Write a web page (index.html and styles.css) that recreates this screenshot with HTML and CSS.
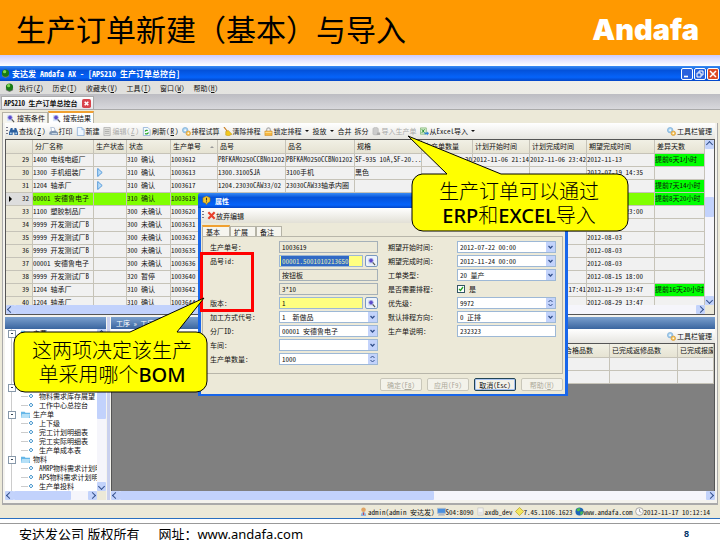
FILE: index.html
```html
<!DOCTYPE html>
<html lang="zh-CN">
<head>
<meta charset="utf-8">
<title>生产订单新建（基本）与导入</title>
<link rel="stylesheet" href="styles.css">
</head>
<body>
<svg class="defs" aria-hidden="true">
  <symbol id="orb" viewBox="0 0 10 10"><path d="M1 6h8v2L5 10 1 8z" fill="#777"/><circle cx="5" cy="4.5" r="4" fill="#187a12"/><circle cx="4" cy="3" r="1.8" fill="#7ed957"/></symbol>
  <symbol id="find" viewBox="0 0 10 10"><path d="M2 1h2v2h2V1h2l2 5v3H6V6H4v3H0V6z" fill="#2b5f9e"/><path d="M1 6h2v2H1zM7 6h2v2H7z" fill="#a8cdf0"/></symbol>
  <symbol id="print" viewBox="0 0 10 10"><path d="M2 0l4 1 1 4H3z" fill="#fff" stroke="#7b93b8" stroke-width=".6"/><path d="M1 5l6-1 3 2v3H3L0 8z" fill="#7e94b0"/><path d="M3 7h6v1H3z" fill="#e8f2fb"/></symbol>
  <symbol id="page" viewBox="0 0 10 10"><path d="M1.500.5h5L9 3v6.500H1.500z" fill="#eef6ff" stroke="#7fa5d2" stroke-width=".8"/><path d="M6.500.5V3H9" fill="#bcd6f2" stroke="#7fa5d2" stroke-width=".6"/></symbol>
  <symbol id="edit" viewBox="0 0 10 10"><path d="M1 .5h7v9H1z" fill="#e4e4e0" stroke="#aaa" stroke-width=".8"/><path d="M2 3h5M2 5h5M2 7h5" stroke="#999" stroke-width=".8"/></symbol>
  <symbol id="refresh" viewBox="0 0 10 10"><path d="M1.500.5h5L9 3v6.500H1.500z" fill="#f3faff" stroke="#7fa5d2" stroke-width=".8"/><path d="M3.500 5a2 2 0 0 1 3-1M7 6a2 2 0 0 1-3.500 1" fill="none" stroke="#21a321" stroke-width="1.300"/></symbol>
  <symbol id="gears" viewBox="0 0 10 10"><circle cx="3.500" cy="3.500" r="3" fill="#a8d0ee" stroke="#6fa6d4" stroke-width=".7"/><circle cx="3.500" cy="3.500" r="1" fill="#fff"/><circle cx="7" cy="7" r="2.500" fill="#f5c35b" stroke="#d89a38" stroke-width=".8"/><circle cx="7" cy="7" r=".9" fill="#fff"/></symbol>
  <symbol id="broom" viewBox="0 0 10 10"><path d="M1 0l4 5" stroke="#c97b1b" stroke-width="1.300"/><path d="M3 5l3-1 4 4-4 2-3-1z" fill="#f2c71d" stroke="#b88c10" stroke-width=".5"/></symbol>
  <symbol id="lock" viewBox="0 0 10 10"><path d="M3 5V3a2 2 0 0 1 4 0v2" fill="none" stroke="#aaa" stroke-width="1.200"/><path d="M1 4.500h8v5H1z" fill="#f6b740" stroke="#c98a24" stroke-width=".6"/><path d="M1.500 6h7" stroke="#ffe39a"/></symbol>
  <symbol id="dbin" viewBox="0 0 10 10"><path d="M1 2c0-2 6-2 6 0v6c0 1-6 1-6 0z" fill="#ccc" stroke="#aaa" stroke-width=".5"/><path d="M6 6h3v3H5z" fill="#aaa"/></symbol>
  <symbol id="excel" viewBox="0 0 10 10"><path d="M.5 1h6.500v7H.5z" fill="#d7efcf" stroke="#6ba95b" stroke-width=".7"/><path d="M2 2.500l3 4M5 2.500l-3 4" stroke="#268c2c"/><path d="M5 6h3V5l2 2-2 2.500V8H5z" fill="#2f83d8"/></symbol>
  <symbol id="lens" viewBox="0 0 10 10"><path d="M1 1h6v7H1z" fill="#d9e4f6"/><circle cx="4.500" cy="4" r="2.300" fill="#5a49c8" stroke="#9a9ae2" stroke-width=".8"/><path d="M6.300 6L9 9" stroke="#555" stroke-width="1.300"/></symbol>
  <symbol id="folder" viewBox="0 0 10 10"><path d="M0 2h4l1 1h5v6H0z" fill="#66b7e8"/><path d="M1 4.500h9L9 9H0z" fill="#b5e0f7"/></symbol>
  <symbol id="play" viewBox="0 0 10 10"><path d="M3 .5l5 4.500-5 4.500z" fill="#b9dcf8" stroke="#4a93d8"/></symbol>
  <symbol id="bulb" viewBox="0 0 10 10"><path d="M1 2l4-2 4 2v4L6 8 5 10 4 8 1 7z" fill="#f3c62b" stroke="#92721a" stroke-width=".6"/><path d="M5 2v3M5 6v1" stroke="#333" stroke-width="1.100"/></symbol>
  <symbol id="cross" viewBox="0 0 10 10"><path d="M1.500 1.500l7 7M8.500 1.500l-7 7" stroke="#e8402c" stroke-width="2.400"/></symbol>
  <symbol id="user" viewBox="0 0 10 10"><circle cx="5" cy="3" r="2.500" fill="#e0a466"/><path d="M2 10c0-6 6-6 6 0z" fill="#8fb4dc"/><path d="M4.500 6h1v3h-1z" fill="#d33"/></symbol>
  <symbol id="pc" viewBox="0 0 10 10"><path d="M.5 1.500h9v5.500h-9z" fill="#4a90e0" stroke="#aab9cc"/><path d="M2 8h6l1 1.500H1z" fill="#9caabd"/></symbol>
  <symbol id="db" viewBox="0 0 10 10"><path d="M2 1h6v8H2z" fill="#f2f2f2" stroke="#bbb" stroke-width=".6"/><path d="M3 6h4M3 7.500h4" stroke="#ccc" stroke-width=".6"/></symbol>
  <symbol id="gem" viewBox="0 0 10 10"><path d="M5 .5L9.500 5 5 9.500.5 5z" fill="#f2e65e" stroke="#b5a224" stroke-width=".8"/></symbol>
  <symbol id="globe" viewBox="0 0 10 10"><circle cx="5" cy="5" r="4.500" fill="#1d66b8"/><path d="M2 2l3-1 1 2-2 2-2-1zM6 5l3 0-1 3-2 1z" fill="#4fc24b"/></symbol>
  <symbol id="clock" viewBox="0 0 10 10"><circle cx="5" cy="5" r="4.300" fill="#f8f8f8" stroke="#999" stroke-width=".9"/><path d="M5 2v3l2 1" fill="none" stroke="#777" stroke-width=".7"/></symbol>
</svg>

<header class="hero"><h1>生产订单新建（基本）与导入</h1><strong class="brand">Andafa</strong></header>
<div class="strip"></div>

<main class="window">
  <div class="titlebar">
    <svg class="ico"><use href="#orb"/></svg><span>安达发 Andafa AX - [APS210 生产订单总控台]</span>
    <div class="winbtns">
      <button aria-label="最小化"><svg viewBox="0 0 10 10"><path d="M2 7.500h4" stroke="#fff" stroke-width="1.600"/></svg></button>
      <button aria-label="还原"><svg viewBox="0 0 10 10"><path d="M4 4V2h4v4H6M2 4h4v4H2z" fill="none" stroke="#fff"/></svg></button>
      <button class="close" aria-label="关闭"><svg viewBox="0 0 10 10"><path d="M2 2l6 6M8 2L2 8" stroke="#fff" stroke-width="1.500"/></svg></button>
    </div>
  </div>
  <nav class="menubar">
    <svg class="ico"><use href="#orb"/></svg>
    <button>执行(<u>Z</u>)</button><button>历史(<u>T</u>)</button><button>收藏夹(<u>V</u>)</button><button>工具(<u>T</u>)</button><button>窗口(<u>W</u>)</button><button>帮助(<u>H</u>)</button>
  </nav>
  <div class="doctabs"><button class="doctab">APS210 生产订单总控台<svg class="x" viewBox="0 0 10 10"><rect width="10" height="10" rx="2" fill="#d8434b"/><path d="M3 3l4 4M7 3L3 7" stroke="#fff" stroke-width="1.800"/></svg></button></div>
  <div class="subtabs"><button><svg class="ico"><use href="#lens"/></svg>搜索条件</button><button class="on"><svg class="ico"><use href="#lens"/></svg>搜索结果</button></div>

  <div class="body">
    <div class="toolbar">
      <i class="grip"></i>
      <button><svg class="ico"><use href="#find"/></svg>查找(<u>Z</u>)</button>
      <button><svg class="ico"><use href="#print"/></svg>打印</button>
      <button><svg class="ico"><use href="#page"/></svg>新建</button>
      <button disabled><svg class="ico"><use href="#edit"/></svg>编辑(<u>Z</u>)</button>
      <button><svg class="ico"><use href="#refresh"/></svg>刷新(<u>R</u>)</button>
      <button><svg class="ico"><use href="#gears"/></svg>排程试算</button>
      <button><svg class="ico"><use href="#broom"/></svg>清除排程</button>
      <button><svg class="ico"><use href="#lock"/></svg>锁定排程<i class="caret"></i></button>
      <button>投放<i class="caret"></i></button>
      <button>合并</button>
      <button>拆分</button>
      <button disabled><svg class="ico"><use href="#dbin"/></svg>导入生产单</button>
      <button><svg class="ico"><use href="#excel"/></svg>从Excel导入<i class="caret"></i></button>
      <button class="end"><svg class="ico"><use href="#gears"/></svg>工具栏管理</button>
    </div>

    <section class="grid">
      <div class="gridrow">
        <div class="clip orders">
          <table>
            <colgroup><col class="c27"><col class="c61"><col class="c33"><col class="c44"><col class="c47"><col class="c68"><col class="c69"><col class="c67"><col class="c51"><col class="c57"><col class="c57"><col class="c68"><col></colgroup>
            <thead><tr><th></th><th>分厂名称</th><th>生产状态</th><th>状态</th><th>生产单号<i class="sort"></i></th><th>品号</th><th>品名</th><th>规格</th><th>生产单数量</th><th>计划开始时间</th><th>计划完成时间</th><th>期望完成时间</th><th>差异天数</th></tr></thead>
            <tbody>
              <tr><th>29</th><td>1400 电线电缆厂</td><td></td><td>310 确认</td><td>1003612</td><td>PBFKAM0250CCBN01202</td><td>PBFKAM0250CCBN01202</td><td>SF-935 10A,SF-20...</td><td class="num">20</td><td>2012-11-06 21:14</td><td>2012-11-06 23:42</td><td>2012-11-13</td><td class="ok">提前6天1小时</td></tr>
              <tr><th>30</th><td>1300 手机组装厂</td><td><svg class="ico"><use href="#play"/></svg></td><td>310 确认</td><td>1003613</td><td>1300.3100SJA</td><td>3100手机</td><td>黑色</td><td></td><td></td><td></td><td>2012-07-19 14:35</td><td></td></tr>
              <tr><th>31</th><td>1204 轴承厂</td><td><svg class="ico"><use href="#play"/></svg></td><td>310 确认</td><td>1003617</td><td>1204.23030CAW33/02</td><td>23030CAW33轴承内圈</td><td></td><td></td><td></td><td></td><td></td><td class="ok">提前7天14小时</td></tr>
              <tr class="sel"><th><i class="cur"></i>32</th><td>00001 安德鲁电子</td><td></td><td>310 确认</td><td>1003619</td><td></td><td></td><td></td><td></td><td></td><td></td><td></td><td class="ok">提前8天20小时</td></tr>
              <tr><th>33</th><td>1100 塑胶制品厂</td><td></td><td>300 未确认</td><td>1003620</td><td></td><td></td><td></td><td></td><td></td><td></td><td>2012-08-03 23:00</td><td></td></tr>
              <tr><th>34</th><td>9999 开发测试厂B</td><td></td><td>300 未确认</td><td>1003631</td><td></td><td></td><td></td><td></td><td></td><td></td><td></td><td></td></tr>
              <tr><th>35</th><td>9999 开发测试厂B</td><td></td><td>300 未确认</td><td>1003632</td><td></td><td></td><td></td><td></td><td></td><td></td><td>2012-08-03</td><td></td></tr>
              <tr><th>36</th><td>9999 开发测试厂B</td><td></td><td>300 未确认</td><td>1003635</td><td></td><td></td><td></td><td></td><td></td><td></td><td>2012-08-03</td><td></td></tr>
              <tr><th>37</th><td>00001 安德鲁电子</td><td></td><td>300 未确认</td><td>1003636</td><td></td><td></td><td></td><td></td><td></td><td></td><td>2012-08-03</td><td></td></tr>
              <tr><th>38</th><td>9999 开发测试厂B</td><td></td><td>320 暂停</td><td>1003640</td><td></td><td></td><td></td><td></td><td></td><td></td><td>2012-08-15 18:00</td><td></td></tr>
              <tr><th>39</th><td>1204 轴承厂</td><td></td><td>310 确认</td><td>1003642</td><td></td><td></td><td></td><td></td><td></td><td>2012-11-29 17:41</td><td>2012-11-29 13:47</td><td class="ok">提前16天20小时</td></tr>
              <tr><th>40</th><td>1204 轴承厂</td><td></td><td>310 确认</td><td>1003644</td><td></td><td></td><td></td><td></td><td></td><td></td><td>2012-08-29 13:47</td><td></td></tr>
            </tbody>
          </table>
        </div>
        <div class="vbar"><i class="arr up"></i><i class="thumb mid"></i><i class="arr down"></i></div>
      </div>
      <div class="hbar"><i class="arr left"></i><i class="thumb t60"></i><i class="arr right"></i><i class="corner"></i></div>
    </section>

    <div class="lower">
      <aside class="side">
        <div class="bar"></div>
        <div class="gridrow treebox">
          <ul class="tree">
            <li class="node"><svg class="ico"><use href="#folder"/></svg>主要</li>
            <li class="kid"></li><li class="kid"></li><li class="kid"></li><li class="kid"></li><li class="kid"></li>
            <li class="node"><svg class="ico"><use href="#folder"/></svg></li>
            <li class="kid">物料需求库存展望</li>
            <li class="kid">工作中心总控台</li>
            <li class="node"><svg class="ico"><use href="#folder"/></svg>生产单</li>
            <li class="kid">上下级</li>
            <li class="kid">完工计划明细表</li>
            <li class="kid">完工实际明细表</li>
            <li class="kid">生产单成本表</li>
            <li class="node"><svg class="ico"><use href="#folder"/></svg>物料</li>
            <li class="kid">AMRP物料需求计划明细</li>
            <li class="kid">APS物料需求计划明细</li>
            <li class="kid">生产单投料</li>
          </ul>
          <div class="vbar"><i class="arr up"></i><i class="thumb top"></i><i class="arr down"></i></div>
        </div>
        <div class="hbar"><i class="arr left"></i><i class="thumb t57"></i><i class="arr right"></i><i class="corner"></i></div>
      </aside>
      <div class="split"></div>
      <section class="detail">
        <div class="bar">工序 » 工序</div>
        <div class="toolbar thin"><button class="end"><svg class="ico"><use href="#gears"/></svg>工具栏管理</button></div>
        <div class="clip gray">
          <table>
            <colgroup><col class="c27"><col><col class="c68"><col class="c68"><col class="c36"></colgroup>
            <thead><tr><th></th><th></th><th>已完成合格品数</th><th>已完成返修品数</th><th>已完成报废品数</th></tr></thead>
            <tbody><tr><th></th><td></td><td></td><td></td><td></td></tr><tr><th></th><td></td><td></td><td></td><td></td></tr></tbody>
          </table>
        </div>
        <div class="hbar"><i class="arr left"></i><i class="thumb t55"></i><i class="arr right"></i></div>
      </section>
    </div>
  </div>

  <div class="status">
    <span><svg class="ico"><use href="#user"/></svg>admin(admin 安达发)</span>
    <span><svg class="ico"><use href="#pc"/></svg>S04:8090</span>
    <span><svg class="ico"><use href="#db"/></svg>axdb_dev</span>
    <span><svg class="ico"><use href="#gem"/></svg>7.45.1106.1623</span>
    <span><svg class="ico"><use href="#globe"/></svg>www.andafa.com</span>
    <span><svg class="ico"><use href="#clock"/></svg>2012-11-17 10:12:14</span>
  </div>
</main>

<footer class="foot"><span>安达发公司 版权所有</span><span class="site">网址：www.andafa.com</span><span class="pageno">8</span></footer>

<form class="dialog">
  <div class="dtitle"><svg class="ico"><use href="#bulb"/></svg>属性</div>
  <div class="dtool"><i class="grip"></i><button type="button"><svg class="ico"><use href="#cross"/></svg>放弃编辑</button></div>
  <div class="dtabs"><button type="button" class="on">基本</button><button type="button">扩展</button><button type="button">备注</button></div>
  <div class="panel">
    <div class="fields">
      <label for="no">生产单号:</label><input id="no" class="ro" value="1003619" readonly>
      <label for="item">品号id:</label><div class="key"><input id="item" class="marked" value="00001.5001010213650"><button type="button" aria-label="选择品号"><svg class="ico"><use href="#lens"/></svg></button></div>
      <span></span><input class="ro" aria-label="品名" value="按钮板" readonly>
      <span></span><input class="ro" aria-label="规格" value="3*10" readonly>
      <label for="ver">版本:</label><div class="key"><input id="ver" value="1"><button type="button" aria-label="选择版本"><svg class="ico"><use href="#lens"/></svg></button></div>
      <label for="mode">加工方式代号:</label><select id="mode"><option>1&nbsp;&nbsp;新做品</option></select>
      <label for="plant">分厂ID:</label><select id="plant"><option>00001 安德鲁电子</option></select>
      <label for="shop">车间:</label><select id="shop"><option></option></select>
      <label for="qty">生产单数量:</label><input id="qty" class="spin" value="1000">
    </div>
    <div class="fields">
      <label for="start">期望开始时间:</label><select id="start"><option>2012-07-22 00:00</option></select>
      <label for="finish">期望完成时间:</label><select id="finish"><option>2012-11-24 00:00</option></select>
      <label for="type">工单类型:</label><select id="type"><option>20 量产</option></select>
      <label for="need">是否需要排程:</label><div class="check"><input id="need" type="checkbox" checked><span>是</span></div>
      <label for="prio">优先级:</label><input id="prio" class="spin" value="9972">
      <label for="dir">默认排程方向:</label><select id="dir"><option>0 正排</option></select>
      <label for="memo">生产单说明:</label><input id="memo" value="232323">
    </div>
  </div>
  <div class="actions"><button type="button" disabled>确定(<u>F8</u>)</button><button type="button" disabled>应用(F9)</button><button type="button" class="main">取消(Esc)</button><button type="button" disabled>帮助(<u>H</u>)</button></div>
</form>

<div class="redbox"></div>

<div class="note note-a">
  <svg viewBox="0 0 226 100"><path d="M16 40H41L2 2 95 40H211a11 11 0 0 1 11 11V86a11 11 0 0 1-11 11H17a11 11 0 0 1-11-11V51a11 11 0 0 1 10-11z" fill="#ff0" stroke="#000"/></svg>
  <p>生产订单可以通过<br><b>ERP</b>和<b>EXCEL</b>导入</p>
</div>
<div class="note note-b">
  <svg viewBox="0 0 200 100"><path d="M13 36H118L192 2 165 36H184a11 11 0 0 1 11 11V85a11 11 0 0 1-11 11H13a11 11 0 0 1-11-11V47a11 11 0 0 1 11-11z" fill="#ff0" stroke="#000"/></svg>
  <p>这两项决定该生产<br>单采用哪个<b>BOM</b></p>
</div>
</body>
</html>
```
FILE: styles.css
```css
* { box-sizing: border-box; }
body {
  margin: 0;
  min-height: 100vh;
  display: flex;
  flex-direction: column;
  position: relative;
  overflow-x: hidden;
  background: #fff;
  color: #111;
  font: 7px/12px "Noto Sans Mono CJK SC", "Noto Sans CJK SC", sans-serif;
}
button, input, select { font: inherit; color: inherit; margin: 0; border-radius: 0; }
button { border: 0; padding: 0; background: none; display: flex; align-items: center; white-space: nowrap; }
i { font-style: normal; }
.defs { position: absolute; width: 0; height: 0; }
.ico { width: 9px; height: 9px; flex: none; }

.hero { height: 55px; background: #f90; display: flex; align-items: center; justify-content: space-between; padding: 0 21px 0 16px; }
.hero h1 { margin: 0; font: 400 30px/40px "Noto Sans CJK SC", sans-serif; color: #000; }
.brand { font: 900 29px/32px Inter, sans-serif; color: #fff; margin-top: 4px; }
.strip { height: 11px; background: linear-gradient(#ccf, #fff); }

.window { flex: 1; display: flex; flex-direction: column; background: #ece9d8; border-bottom: 1px solid #2a6fc0; }
.titlebar { height: 15px; display: flex; align-items: center; gap: 2px; padding: 0 0 0 1px; background: linear-gradient(#3a8cf5, #0452da 30%, #0563fa 75%, #0345c5); color: #fff; font-size: 8px; font-weight: 700; }
.winbtns { margin-left: auto; display: flex; gap: 1px; padding-right: 1px; }
.winbtns button { width: 12px; height: 12px; border: 1px solid #fff; border-radius: 2px; background: #2b62dd; }
.winbtns .close { background: #dc4a24; }
.menubar { height: 13px; display: flex; align-items: center; gap: 9px; padding-left: 5px; background: linear-gradient(90deg, #dcdcda, #f4f3ec); }
.menubar .ico { margin-right: -4px; }
.doctabs { height: 16px; background: linear-gradient(#bcbcc2, #d8d8dc); border-bottom: 1px solid #aaa; display: flex; padding: 2px 0 0 1px; }
.doctab { background: linear-gradient(#fff, #e4e4e8); border: 1px solid #aaa; border-bottom: 0; padding: 0 2px; gap: 4px; font-weight: 700; }
.doctab .x { width: 9px; height: 9px; }
.subtabs { height: 13px; display: flex; align-items: flex-end; padding-left: 2px; }
.subtabs button { height: 11px; padding: 0 2px 0 3px; gap: 2px; border: 1px solid #b5b3a6; border-bottom: 0; background: #f6f5ee; }
.subtabs .on { height: 12px; background: #fff; border-top: 2px solid #f0a030; }

.body { flex: 1; display: flex; flex-direction: column; margin: 0 2px; padding: 0 2px 3px; background: #f4f3ee; border: solid #aaa; border-width: 0 1px 2px; }
.toolbar { height: 16px; display: flex; align-items: center; gap: 3px; padding: 0 3px 0 1px; background: linear-gradient(#fff, #e6e5e0); }
.toolbar button { gap: 1px; }
.toolbar button:disabled { color: #aaa; }
.toolbar .end { margin-left: auto; }
.toolbar .grip { margin-right: -2px; }
.toolbar.thin { height: 14px; }
.grip { width: 2px; height: 9px; background: repeating-linear-gradient(#778 0 1px, transparent 1px 3px); background-size: 1px; }
.caret { border: 2px solid transparent; border-top-color: #111; border-bottom: 0; margin: 0 1px 0 2px; }

.grid { border: 1px solid #555; background: #f4f4f4; }
.gridrow { display: flex; }
.clip { flex: 1; min-width: 0; overflow: hidden; }
.orders { height: 165px; }
table { table-layout: fixed; width: 100%; border-spacing: 0; }
th, td { padding: 0; border: solid #c6c3b8; border-width: 0 1px 1px 0; height: 13px; line-height: 11px; vertical-align: top; white-space: nowrap; overflow: hidden; text-align: left; font-weight: 400; background: #f1f1f1; }
thead th { height: 14px; line-height: 13px; padding-left: 2px; background: linear-gradient(#f1f0e5, #e6e3d3); position: relative; }
tbody th { text-align: right; padding-right: 3px; background: #ece9d8; position: relative; }
td .ico { display: block; margin: 1px; }
.num { text-align: right; }
.sel td { background: #80ff00; }
.sel th { background: #ddd; }
td.ok { background: #0f0; }
.cur { position: absolute; left: 3px; top: 3px; border: 3px solid transparent; border-left-color: #000; border-right: 0; }
.sort { position: absolute; right: 3px; top: 6px; border: 2px solid transparent; border-bottom-color: #999; border-top: 0; }
.c27 { width: 27px; } .c33 { width: 33px; } .c36 { width: 36px; } .c44 { width: 44px; } .c47 { width: 47px; } .c51 { width: 51px; }
.c57 { width: 57px; } .c61 { width: 61px; } .c67 { width: 67px; } .c68 { width: 68px; } .c69 { width: 69px; }

.vbar { width: 9px; display: flex; flex-direction: column; background: #f5f5fb; }
.hbar { height: 9px; display: flex; background: #f5f5fb; }
.arr { width: 9px; height: 9px; flex: none; background: #c3d3fb; border-radius: 1px; display: flex; align-items: center; justify-content: center; }
.arr::before { content: ""; width: 4px; height: 4px; border: solid #34518c; border-width: 1px 0 0 1px; transform: rotate(45deg); }
.arr.left::before { transform: rotate(-45deg); }
.arr.right::before { transform: rotate(135deg); }
.arr.down::before { transform: rotate(225deg); }
.arr.down { margin-top: auto; }
.arr.right { margin-left: auto; }
.thumb { background: #c2d2fc; border-radius: 1px; }
.mid { margin-top: 48px; height: 20px; }
.top { height: 81px; }
.t60 { width: 60%; } .t57 { width: 57px; } .t55 { width: 52%; }
.corner { width: 9px; background: #ece9d8; }

.lower { flex: 1; display: flex; margin-top: 2px; }
.side { width: 101px; display: flex; flex-direction: column; background: #fff; }
.bar { height: 12px; padding-left: 5px; background: linear-gradient(#7ba0ce, #3a659f); color: #fff; }
.treebox { flex: 1; }
.tree { flex: 1; min-width: 0; height: 162px; overflow: hidden; margin: 0; padding: 0 0 0 6px; list-style: none; line-height: 9px; white-space: nowrap; background: linear-gradient(#ccc, #ccc) 6px 0 / 1px 100% no-repeat; }
.tree li { height: 9px; display: flex; align-items: center; }
.tree .node { margin-left: -3px; }
.node::before { content: ""; width: 6px; height: 6px; border: 1px solid #89a; background: linear-gradient(#345, #345) center / 2px 1px no-repeat #fff; margin-right: 5px; flex: none; }
.node .ico { margin-right: 3px; }
.kid { padding-left: 10px; gap: 11px; background: radial-gradient(circle at 2px 2px, #cfe8f8 1px, #5a9fcf 1px 2px, transparent 2px) 18px 2px / 5px 5px no-repeat; }
.kid::before { content: ""; width: 7px; height: 1px; background: #ccc; flex: none; }
.split { width: 5px; background: linear-gradient(90deg, #f4f3ee 1px, #c9d0ee 1px 4px, #f4f3ee 4px); }
.detail { flex: 1; min-width: 0; display: flex; flex-direction: column; }
.gray { background: #808080; border: solid #555; border-width: 1px 1px 0; }

.status { height: 13px; display: flex; align-items: center; justify-content: flex-end; gap: 2px; padding-right: 10px; }
.status span { display: flex; align-items: center; }
.foot { margin-top: 4px; height: 20px; border-top: 1px solid #999; display: flex; align-items: center; padding: 0 31px 0 19px; font: 13px/18px "Noto Sans", "Noto Sans CJK SC", sans-serif; color: #000; }
.site { margin-left: 19px; }
.pageno { margin-left: auto; font: 700 9px/12px "Liberation Sans", sans-serif; color: #036; }

.dialog { position: absolute; left: 198px; top: 193px; width: 370px; background: #ece9d8; border: solid #1866ea; border-width: 0 3px 2px; border-radius: 3px 3px 0 0; }
.dtitle { height: 15px; margin: 0 -3px; padding-left: 4px; display: flex; align-items: center; gap: 4px; color: #fff; font-weight: 700; background: linear-gradient(#3a8cf5, #0452da 30%, #0563fa 80%, #0345c5); border-radius: 3px 3px 0 0; }
.dtool { height: 15px; display: flex; align-items: center; gap: 3px; background: linear-gradient(#fff, #e2e0d6); padding-left: 1px; }
.dtabs { display: flex; align-items: flex-end; height: 13px; padding-left: 1px; }
.dtabs button { width: 26px; height: 10px; padding-left: 3px; border: 1px solid #b5b3a6; border-bottom: 0; background: #f6f5ee; }
.dtabs .on { width: 28px; height: 11px; border-top: 2px solid #f0a030; }
.panel { display: flex; gap: 10px; height: 138px; margin: 0 2px 0 1px; padding: 4px 6px 0 7px; border: 1px solid #b8b6aa; }
.fields { flex: 1; display: grid; grid-template-columns: 69px 1fr; grid-auto-rows: 12px; gap: 2px 0; align-content: start; }
.fields label { white-space: nowrap; }
.fields input, .fields select { width: 100%; min-width: 0; height: 12px; padding: 0 2px; border: 1px solid #9db8d6; background: #fff; line-height: 10px; }
.fields .ro { background: #ece9d8; border-color: #a5b0b8; }
.key { display: flex; gap: 2px; }
.key input { background: #ffff80; }
.key .marked { color: #e8ecb0; background: linear-gradient(#316ac5, #316ac5) 1px 0 / 68px 100% no-repeat #ffff80; }
.key button { width: 13px; flex: none; justify-content: center; border: 1px solid #7a99c0; border-radius: 2px; background: #eef3fb; }
.fields select { appearance: none; background: url("data:image/svg+xml,%3Csvg xmlns='http://www.w3.org/2000/svg' viewBox='0 0 9 10'%3E%3Cpath fill='%23c3d3fb' d='M0 0h9v10H0z'/%3E%3Cpath d='M2.500 4l2 2 2-2' fill='none' stroke='%2334518c' stroke-width='1.300'/%3E%3C/svg%3E") right / 9px 10px no-repeat #fff; }
.fields .spin { background: url("data:image/svg+xml,%3Csvg xmlns='http://www.w3.org/2000/svg' viewBox='0 0 9 10'%3E%3Cpath fill='%23c3d3fb' d='M0 0h9v10H0z'/%3E%3Cpath d='M2.500 4l2-2 2 2M2.500 6l2 2 2-2' fill='none' stroke='%2334518c'/%3E%3C/svg%3E") right / 9px 10px no-repeat #fff; }
.check { display: flex; align-items: center; gap: 4px; }
.fields .check input { appearance: none; width: 8px; height: 8px; padding: 0; border-color: #356; background: url("data:image/svg+xml,%3Csvg xmlns='http://www.w3.org/2000/svg' viewBox='0 0 6 6'%3E%3Cpath d='M1 3l1.500 1.500L5 1' fill='none' stroke='%2321a121' stroke-width='1.300'/%3E%3C/svg%3E") center no-repeat #fff; }
.actions { display: flex; justify-content: flex-end; gap: 5px; padding: 4px 2px 3px; }
.actions button { width: 42px; height: 13px; justify-content: center; border: 1px solid #c9c7ba; border-radius: 2px; background: #f3f2ea; }
.actions button:disabled { color: #aca899; }
.actions .main { border-color: #245; box-shadow: inset 0 0 0 1px #a8c3f0; }

.redbox { position: absolute; left: 200px; top: 252px; width: 54px; height: 60px; border: 3px solid #f00; }
.note { position: absolute; }
.note svg { display: block; width: 100%; }
.note p { position: absolute; left: 0; right: 0; margin: 0; text-align: center; font: 300 20px/24px "Noto Sans", "Noto Sans CJK SC", sans-serif; color: #000; }
.note b { font-weight: 500; }
.note-a { left: 406px; top: 134px; width: 226px; }
.note-a p { top: 46px; }
.note-b { left: 12px; top: 296px; width: 200px; }
.note-b p { top: 43px; }
```
